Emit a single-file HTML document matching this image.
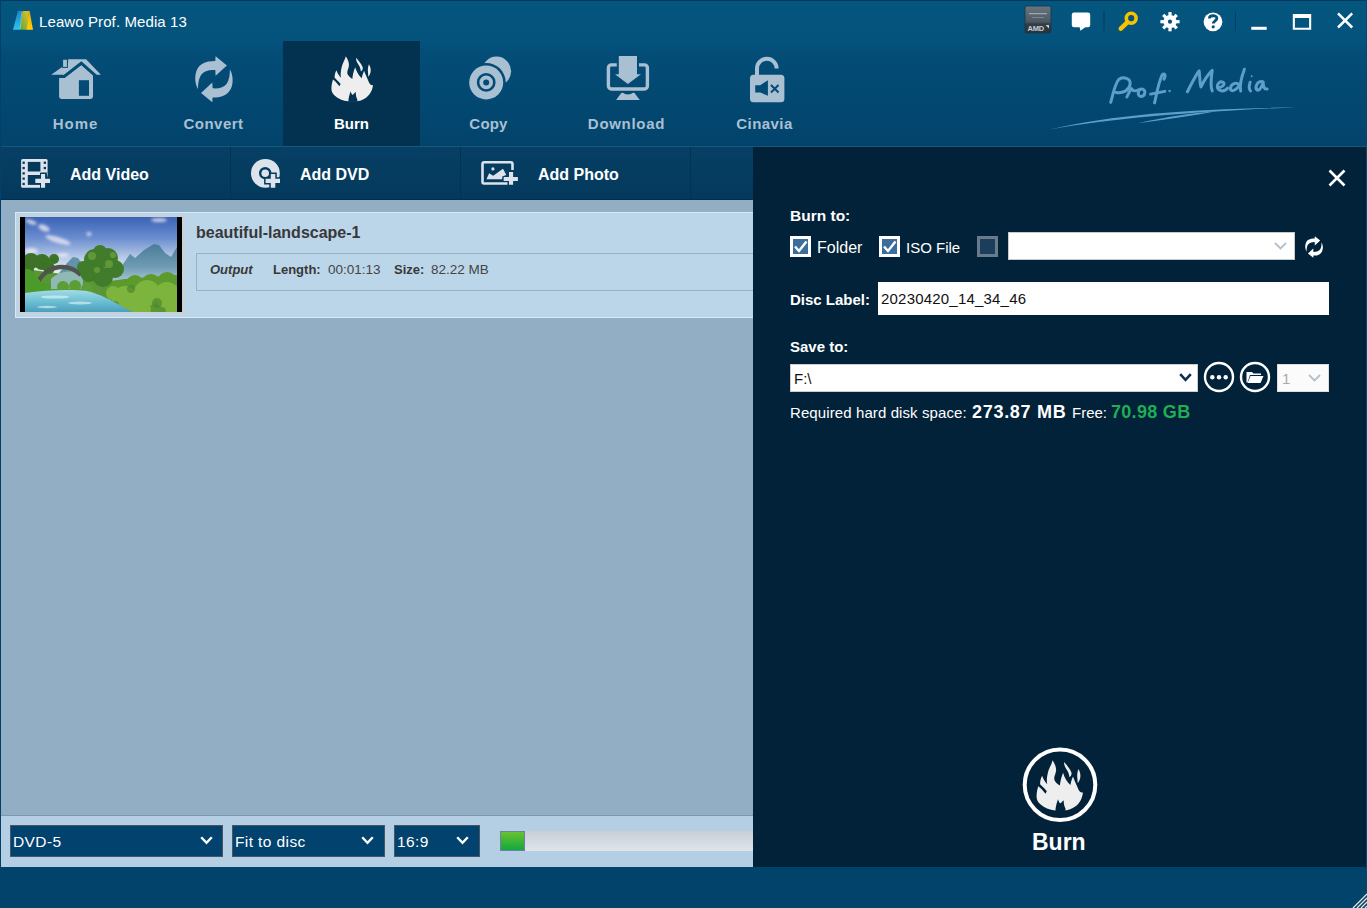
<!DOCTYPE html>
<html><head><meta charset="utf-8">
<style>
*{box-sizing:border-box;margin:0;padding:0}
html,body{width:1367px;height:908px;overflow:hidden;background:#003f66;font-family:"Liberation Sans",sans-serif}
.a{position:absolute}
svg{position:absolute;overflow:visible}
#header{position:absolute;left:0;top:0;width:1367px;height:147px;background:linear-gradient(#04567f 0%,#04537d 28%,#034d77 36%,#02436b 100%)}
#title{position:absolute;left:39px;top:13px;color:#fff;font-size:15px;letter-spacing:0.1px;white-space:nowrap}
.tab{position:absolute;top:41px;width:137px;height:105px}
.tab .lbl{position:absolute;left:0;width:100%;top:74px;font-size:15px;font-weight:bold;color:#a9c0d3;text-align:center;letter-spacing:0.5px;line-height:17px}
.tab.sel{background:#033251}
.tab.sel .lbl{color:#fff;letter-spacing:0}
#toolbar{position:absolute;left:0;top:146px;width:753px;height:54px;background:linear-gradient(#064064,#04395d);border-top:1px solid #15577f;border-bottom:1px solid #022f4e}
.tb{position:absolute;top:18px;color:#fff;font-weight:bold;font-size:16px;line-height:19px;white-space:nowrap}
.sep{position:absolute;top:0;width:1px;height:52px;background:#033352}
#content{position:absolute;left:0;top:200px;width:753px;height:615px;background:#91aec4}
#right{position:absolute;left:753px;top:147px;width:613px;height:720px;background:#02223a}
#bottom{position:absolute;left:0;top:815px;width:753px;height:52px;background:#b4cfe3;border-top:1px solid #7b98ae}
#status{position:absolute;left:0;top:867px;width:1367px;height:41px;background:#02436c}
.rl{position:absolute;color:#fff;font-size:15px;white-space:nowrap;line-height:18px}
.b{font-weight:bold}
.sel2{position:absolute;top:9px;height:32px;background:#02426e;border:1px solid #4b5560;color:#fff;font-size:15.5px;line-height:32px;padding-left:2px;letter-spacing:0.4px}
</style></head>
<body>
<div id="header">
  <!-- logo -->
  <svg style="left:13px;top:11px" width="21" height="20" viewBox="0 0 21 20">
    <defs>
      <linearGradient id="lg1" x1="0" y1="0" x2="0" y2="1"><stop offset="0" stop-color="#1b86c4"/><stop offset="1" stop-color="#2cc3f0"/></linearGradient>
      <linearGradient id="lg2" x1="1" y1="0" x2="0" y2="1"><stop offset="0" stop-color="#e8c51a"/><stop offset="1" stop-color="#55a64a"/></linearGradient>
      <linearGradient id="lg3" x1="0" y1="0" x2="0" y2="1"><stop offset="0" stop-color="#f4a41c"/><stop offset="1" stop-color="#ffd000"/></linearGradient>
    </defs>
    <path d="M0 18.7 L4.9 0 L8.9 0 L6.9 18.7 Z" fill="url(#lg1)"/>
    <path d="M6.9 18.7 L9.5 0 L16 0 L14.1 18.7 Z" fill="url(#lg2)"/>
    <path d="M13.6 18.7 L15.8 0 L16.6 0 L20 18.7 Z" fill="url(#lg3)"/>
    <path d="M8.9 0.5 L7.2 18" stroke="#d8f0f8" stroke-width="0.7" opacity="0.7"/>
  </svg>
  <div id="title">Leawo Prof. Media 13</div>

  <div class="tab" style="left:7px"><div class="lbl" style="letter-spacing:0.9px">Home</div></div>
  <div class="tab" style="left:145px"><div class="lbl" style="letter-spacing:0.5px">Convert</div></div>
  <div class="tab sel" style="left:283px"><div class="lbl">Burn</div></div>
  <div class="tab" style="left:420px"><div class="lbl" style="letter-spacing:0.2px">Copy</div></div>
  <div class="tab" style="left:558px"><div class="lbl" style="letter-spacing:0.7px">Download</div></div>
  <div class="tab" style="left:696px"><div class="lbl" style="letter-spacing:0.45px">Cinavia</div></div>
    <!-- home -->
  <svg style="left:0;top:0" width="1367" height="147">
    <g transform="translate(48 55)" fill="#a9c0d3">
      <path d="M3.2 19.8 L20.1 7.8 L20.1 4.2 L38.1 4.2 L52.9 19.8 Z"/>
      <path d="M11.1 22 L33.3 8.5 L45 20 L45 41.6 Q45 43.9 42.7 43.9 L13.4 43.9 Q11.1 43.9 11.1 41.6 Z"/>
      <path d="M4 21.4 L16.2 21.4 L33.3 8.2 L48.5 21.6" fill="none" stroke="#034b75" stroke-width="3"/>
      <rect x="14.6" y="4.2" width="4.8" height="8.2" stroke="#034b75" stroke-width="1"/>
      <rect x="30.9" y="25.2" width="10.1" height="15.6" fill="#034b75"/>
    </g>
    <!-- convert -->
    <g transform="translate(190 52)" fill="#a9c0d3">
      <path id="cvarc" d="M8 37.2 C3 28 5 16 12 12 C16 9.5 20 8.9 25.3 8.9 L25.6 4.2 L36.9 13.4 L25.6 23.8 L25.3 18.1 C19 17.5 14 19 11 23 C8.5 27 8 32 8 37.2 Z"/>
      <use href="#cvarc" transform="rotate(180 23.95 27.2)"/>
    </g>
    <!-- burn flame -->
    <g transform="translate(326 52) scale(0.05727)">
      <g fill="#eeeeee" id="flame">
        <path d="M95 640 C95 590 105 530 122 482 C150 500 190 540 235 600 L255 560 C215 510 180 480 150 450 C150 400 160 360 182 318 C200 370 230 420 262 450 C250 400 255 330 280 240 C300 180 335 130 345 75 C390 140 405 200 400 240 C395 290 368 320 372 370 C376 410 420 440 460 470 C465 410 480 340 510 268 C530 340 570 410 625 460 C632 410 648 370 665 328 C685 390 715 440 745 520 C760 560 790 590 820 578 C815 650 780 740 700 800 C640 845 580 860 520 860 L385 860 C300 855 210 820 150 760 C115 725 95 690 95 640 Z"/>
        <path d="M525 100 C570 155 620 210 640 265 C650 300 630 325 610 342 C605 300 595 260 570 225 C545 190 522 150 525 100 Z"/>
        <path d="M750 212 C785 270 790 330 770 380 C760 405 750 420 738 432 C738 380 728 330 732 290 C735 260 742 235 750 212 Z"/>
      </g>
      <g fill="#033251">
        <path d="M390 870 C392 810 405 760 430 685 C445 735 458 752 472 748 C485 730 500 712 520 700 C518 750 530 800 548 830 L545 870 Z"/>
      </g>
    </g>
    <!-- copy -->
    <g>
      <circle cx="496.5" cy="71.2" r="14.6" fill="#a9c0d3"/>
      <circle cx="486.2" cy="82.4" r="19.5" fill="#034a74"/>
      <circle cx="486.2" cy="82.4" r="17" fill="#a9c0d3"/>
      <circle cx="486.2" cy="82.4" r="8.1" fill="none" stroke="#034a74" stroke-width="2.6"/>
      <circle cx="486.2" cy="82.4" r="3" fill="#034a74"/>
    </g>
    <!-- download -->
    <g>
      <rect x="608.4" y="64.9" width="39" height="24.1" rx="3" fill="none" stroke="#a9c0d3" stroke-width="3.4"/>
      <path d="M616.8 54 L639 54 L639 72.2 L644.5 72.2 L627.9 86.5 L611.3 72.2 L616.8 72.2 Z" fill="#034a74"/>
      <path d="M618.8 56 L637 56 L637 74.2 L640.9 74.2 L627.9 84.1 L615 74.2 L618.8 74.2 Z" fill="#a9c0d3"/>
      <path d="M621.5 92.8 L634.3 92.8 L639.8 100 L616.1 100 Z" fill="#a9c0d3"/>
      <path d="M622 92 Q627.9 97 633.8 92 Z" fill="#034a74"/>
    </g>
    <!-- cinavia -->
    <g>
      <path d="M757 75 L757 68.5 A9.8 9.8 0 0 1 776.6 68.5 L776.6 67.5" fill="none" stroke="#a9c0d3" stroke-width="4"/>
      <rect x="750" y="74.7" width="34.4" height="27.6" rx="3.5" fill="#a9c0d3"/>
      <path d="M755.2 85.2 L760.2 85.2 L767.9 80.2 L767.9 95.7 L760.2 92.4 L755.2 92.4 Z" fill="#034a74"/>
      <path d="M771 85 L778.5 92.5 M778.5 85 L771 92.5" stroke="#034a74" stroke-width="2"/>
    </g>
  </svg>

  <svg style="left:0;top:0" width="1367" height="147">
    <defs>
      <linearGradient id="amd" x1="0" y1="0" x2="0" y2="1"><stop offset="0" stop-color="#68767f"/><stop offset="0.6" stop-color="#4b5761"/><stop offset="0.66" stop-color="#333d45"/><stop offset="1" stop-color="#2a333a"/></linearGradient>
    </defs>
    <rect x="1025" y="6" width="26" height="27" rx="2" fill="url(#amd)" stroke="#1d3448" stroke-width="0.8"/>
    <rect x="1029" y="13" width="18" height="1.3" fill="#b9c2c9" opacity="0.7"/>
    <rect x="1032" y="17" width="12" height="0.8" fill="#b9c2c9" opacity="0.5"/>
    <text x="1027.5" y="30.5" font-family="Liberation Sans" font-weight="bold" font-size="7.5" fill="#c8d0d6" letter-spacing="-0.2">AMD</text>
    <path d="M1045.5 25 L1049 25 L1049 28.5 Z" fill="#c8d0d6"/>
    <!-- chat -->
    <rect x="1071.8" y="12.5" width="18.4" height="14.7" rx="2.2" fill="#fff"/>
    <path d="M1079.5 26.8 L1085.8 26.8 L1080.5 30.8 Z" fill="#fff"/>
    <rect x="1103.5" y="11" width="1" height="20" fill="#023a5e"/>
    <!-- key -->
    <circle cx="1131.2" cy="18.2" r="4.9" fill="none" stroke="#f7c300" stroke-width="3.6"/>
    <path d="M1127.3 22.3 L1120.8 28.6" stroke="#f7c300" stroke-width="4.6" stroke-linecap="round"/>
    <!-- gear -->
    <g transform="translate(1170 21.7)" fill="#fff">
      <rect x="-1.6" y="-9.6" width="3.2" height="19.2"/>
      <rect x="-1.6" y="-9.6" width="3.2" height="19.2" transform="rotate(45)"/>
      <rect x="-1.6" y="-9.6" width="3.2" height="19.2" transform="rotate(90)"/>
      <rect x="-1.6" y="-9.6" width="3.2" height="19.2" transform="rotate(135)"/>
      <circle r="6.6"/>
      <circle r="2.1" fill="#03507b"/>
    </g>
    <!-- help -->
    <circle cx="1213" cy="21.8" r="9.4" fill="#fff"/>
    <path d="M1209.4 18.4 C1209.4 15 1216.9 14.8 1216.9 18.3 C1216.9 20.8 1213.2 20.9 1213.2 23.6" fill="none" stroke="#03507b" stroke-width="2.8"/>
    <circle cx="1213.2" cy="26.8" r="1.6" fill="#03507b"/>
    <rect x="1235.3" y="11" width="1" height="20" fill="#023a5e"/>
    <rect x="1236.3" y="11" width="1" height="20" fill="#0a6396" opacity="0.6"/>
    <!-- min max close -->
    <rect x="1251.3" y="26.8" width="15.4" height="3" fill="#fff"/>
    <path d="M1292.8 14 H1311.2 V29.8 H1292.8 Z M1294.9 17.9 V27.7 H1309.1 V17.9 Z" fill="#fff" fill-rule="evenodd"/>
    <path d="M1338 13.3 L1352.2 27.5 M1352.2 13.3 L1338 27.5" stroke="#fff" stroke-width="2.5"/>
    <!-- prof media script -->
    <g transform="translate(1040 55) scale(0.1975)" fill="none" stroke="#5e9ecb" stroke-width="15" stroke-linecap="round" stroke-linejoin="round">
      <path d="M358 240 C370 200 378 150 398 125 C420 105 462 118 456 150 C450 180 420 195 385 190"/>
      <path d="M440 212 C450 192 458 178 463 170 C470 180 478 188 500 176"/>
      <path d="M515 172 C495 172 490 210 512 210 C535 208 538 172 515 172 Z"/>
      <path d="M580 242 C592 190 600 140 618 102 C628 88 640 100 628 122"/>
      <path d="M560 198 L632 184"/>
      <circle cx="656" cy="182" r="6" fill="#5e9ecb" stroke="none"/>
      <path d="M746 186 C770 140 790 100 806 80 C810 120 810 150 815 162 C830 130 850 100 872 78 C866 120 862 160 872 182"/>
      <path d="M900 166 C930 162 942 142 922 136 C896 134 884 176 922 182 C935 182 945 175 950 168"/>
      <path d="M1010 152 C990 132 960 150 965 176 C975 188 1000 172 1010 152 M1035 72 C1020 112 1010 150 1016 182"/>
      <path d="M1064 138 C1058 156 1054 170 1066 182"/>
      <circle cx="1072" cy="108" r="5" fill="#5e9ecb" stroke="none"/>
      <path d="M1130 136 C1100 126 1085 166 1100 178 C1115 182 1126 152 1130 136 C1130 160 1135 176 1150 172"/>
    </g>
    <g transform="translate(1040 55) scale(0.1975)" fill="#5e9ecb">
      <path d="M45 378 C400 294 800 274 1295 264 C800 288 400 314 45 378 Z"/>
      <path d="M495 345 C650 310 780 292 905 283 C780 304 650 326 495 345 Z"/>
    </g>
  </svg>

</div>
<div id="toolbar">
  <div class="tb" style="left:70px">Add Video</div>
  <div class="sep" style="left:230px"></div>
  <div class="tb" style="left:300px">Add DVD</div>
  <div class="sep" style="left:460px"></div>
  <div class="tb" style="left:538px">Add Photo</div>
  <div class="sep" style="left:690px"></div>
    <svg style="left:-0px;top:-147px" width="753" height="200">
    <!-- film -->
    <g transform="translate(16 155)">
      <rect x="5.1" y="3.9" width="26.5" height="28.9" rx="1.5" fill="#dce3ea"/>
      <g fill="#053a5e">
        <rect x="6.5" y="6.6" width="2.3" height="2.3"/><rect x="6.5" y="11.9" width="2.3" height="2.3"/><rect x="6.5" y="17.2" width="2.3" height="2.3"/><rect x="6.5" y="22.5" width="2.3" height="2.3"/><rect x="6.5" y="27.8" width="2.3" height="2.3"/>
        <rect x="27.7" y="6.6" width="2.3" height="2.3"/><rect x="27.7" y="11.9" width="2.3" height="2.3"/>
        <rect x="11.8" y="6.9" width="12.6" height="9.6"/>
        <rect x="11.8" y="20" width="12.6" height="9.9"/>
        <path d="M24.4 17.5 L33 17.5 L33 33.5 L24.4 33.5 Z"/>
      </g>
      <path d="M30.6 17.5 L31.6 17.5 L31.6 22.8 Z" fill="#dce3ea"/>
      <path d="M24 18.1 H30.1 V22.8 H35 V29.1 H30.1 V33.8 H24 V29.1 H18.3 V22.8 H24 Z" fill="#053a5e"/>
      <path d="M25 19.1 H29.1 V23.8 H34 V28.1 H29.1 V32.8 H25 V28.1 H19.3 V23.8 H25 Z" fill="#dce3ea"/>
    </g>
    <!-- dvd -->
    <g transform="translate(246 155)">
      <circle cx="19.4" cy="18.3" r="14.4" fill="#dce3ea"/>
      <circle cx="19.2" cy="18.2" r="5" fill="none" stroke="#053a5e" stroke-width="2.4"/>
      <path d="M23.3 17.6 H30.8 V22.3 H35.5 V29.6 H30.8 V34.5 H23.3 V29.6 H18.1 V22.3 H23.3 Z" fill="#053a5e"/>
      <path d="M24.8 19.1 H29.3 V23.8 H34 V28.1 H29.3 V32.8 H24.8 V28.1 H19.6 V23.8 H24.8 Z" fill="#dce3ea"/>
    </g>
    <!-- photo -->
    <g transform="translate(476 156)" fill="#dce3ea">
      <path d="M31.5 27.5 L8 27.5 Q6.5 27.5 6.5 26 L6.5 8 Q6.5 6.2 8.3 6.2 L34.7 6.2 Q36.5 6.2 36.5 8 L36.5 13.9" fill="none" stroke="#dce3ea" stroke-width="2.6"/>
      <circle cx="16.9" cy="12.9" r="1.6"/>
      <path d="M10.5 23.2 L13.1 17.2 L17.2 19.8 L27 12.7 L30.3 19 L26.2 20.5 L26.2 23.2 Z"/>
      <path d="M33 16.1 H37.1 V21 H41.9 V25.1 H37.1 V28.8 H33 V25.1 H27.7 V21 H33 Z"/>
    </g>
  </svg>

</div>
<div id="content">
    <div class="a" style="left:15px;top:12px;width:760px;height:106px;background:#bcd6e9;border:1px solid #d8e8f4;border-right:none"></div>
  <div class="a" style="left:18px;top:15px;width:167px;height:99px;background:#c9d1d8"></div>
  <div class="a" style="left:20px;top:17px;width:162px;height:95px;background:#000"></div>
  <svg style="left:25px;top:17px;overflow:hidden" width="152" height="95" viewBox="0 0 152 95">
    <defs>
      <linearGradient id="sky" x1="0" y1="0" x2="0" y2="1">
        <stop offset="0" stop-color="#3a63b6"/><stop offset="0.22" stop-color="#6a8ccf"/><stop offset="0.42" stop-color="#b4c8e6"/><stop offset="0.55" stop-color="#e2e9f0"/><stop offset="1" stop-color="#e6edf0"/>
      </linearGradient>
      <linearGradient id="mtn" x1="0" y1="0" x2="0" y2="1">
        <stop offset="0" stop-color="#4b7c9a"/><stop offset="0.6" stop-color="#6d9ab3"/><stop offset="1" stop-color="#a3c4cf"/>
      </linearGradient>
      <linearGradient id="water" x1="0" y1="0" x2="0" y2="1">
        <stop offset="0" stop-color="#a2dbe6"/><stop offset="0.5" stop-color="#6ec0d4"/><stop offset="1" stop-color="#4a9fbd"/>
      </linearGradient>
      <filter id="bl"><feGaussianBlur stdDeviation="0.7"/></filter>
      <filter id="bl2"><feGaussianBlur stdDeviation="1.4"/></filter>
    </defs>
    <rect width="152" height="95" fill="url(#sky)"/>
    <g fill="#f4eef4" opacity="0.75" filter="url(#bl2)">
      <ellipse cx="6" cy="5" rx="6" ry="2" transform="rotate(20 6 5)"/>
      <ellipse cx="19" cy="11" rx="6" ry="3" transform="rotate(25 19 11)"/>
      <ellipse cx="33" cy="23" rx="13" ry="3" transform="rotate(18 33 23)"/>
      <ellipse cx="6" cy="34" rx="7" ry="3"/>
      <ellipse cx="38" cy="38" rx="6" ry="2"/>
      <ellipse cx="134" cy="3" rx="8" ry="2"/>
      <ellipse cx="64" cy="17" rx="2.5" ry="2"/>
    </g>
    <g filter="url(#bl)">
      <path d="M84 64 L98 47 L105 37 L110 41 L119 33 L129 27 L134 28 L140 36 L146 40 L152 30 L152 64 Z" fill="url(#mtn)"/>
      <path d="M34 56 L42 46 L48 40 L53 41 L58 48 L60 58 Z" fill="#6592ab"/>
      <path d="M0 52 L30 56 L60 60 L85 64 L100 62 L152 58 L152 95 L0 95 Z" fill="#5a9634"/>
      <path d="M26 62 C34 54 48 52 58 58 L58 72 L26 72 Z" fill="#8fb9b4"/>
      <g fill="#3c7328">
        <circle cx="6" cy="44" r="8"/><circle cx="17" cy="45" r="8"/><circle cx="29" cy="42" r="5"/><circle cx="2" cy="52" r="7"/><circle cx="24" cy="51" r="6"/>
      </g>
      <path d="M12 68 C16 56 27 50 37 50 C45 50 52 54 56 58" fill="none" stroke="#4f544a" stroke-width="4.5"/>
      <g fill="#3f7b2b">
        <circle cx="70" cy="43" r="11"/><circle cx="83" cy="41" r="10"/><circle cx="90" cy="52" r="9"/><circle cx="64" cy="56" r="9"/><circle cx="78" cy="60" r="10"/><circle cx="75" cy="35" r="7"/><circle cx="58" cy="50" r="6"/>
      </g>
      <g fill="#6a9e3c" opacity="0.8">
        <circle cx="67" cy="39" r="4"/><circle cx="84" cy="47" r="4"/><circle cx="72" cy="53" r="3"/><circle cx="88" cy="38" r="3"/>
      </g>
      <g fill="#4c9a2a">
        <circle cx="6" cy="70" r="11"/><circle cx="2" cy="60" r="8"/><circle cx="20" cy="72" r="6"/>
      </g>
      <g fill="#5a9e34">
        <circle cx="38" cy="70" r="6"/><circle cx="50" cy="69" r="6"/><circle cx="62" cy="72" r="6"/>
      </g>
      <g fill="#5d9a2e">
        <circle cx="95" cy="73" r="10"/><circle cx="110" cy="67" r="9"/><circle cx="126" cy="67" r="10"/><circle cx="142" cy="65" r="10"/><circle cx="152" cy="66" r="8"/>
      </g>
      <g fill="#7db43c">
        <circle cx="100" cy="82" r="13"/><circle cx="122" cy="76" r="13"/><circle cx="142" cy="78" r="13"/><circle cx="150" cy="90" r="10"/><circle cx="116" cy="92" r="10"/><circle cx="88" cy="76" r="7"/>
      </g>
      <g fill="#4e8a2c" opacity="0.7">
        <circle cx="106" cy="72" r="4"/><circle cx="132" cy="86" r="5"/><circle cx="90" cy="88" r="4"/>
      </g>
      <path d="M0 76 C20 73 45 72 62 74 C75 77 88 84 98 90 L108 95 L0 95 Z" fill="url(#water)"/>
      <g fill="#e6f7fa" opacity="0.6">
        <ellipse cx="30" cy="80" rx="14" ry="1.6"/><ellipse cx="55" cy="86" rx="12" ry="1.4"/><ellipse cx="22" cy="90" rx="10" ry="1.2"/>
      </g>
    </g>
  </svg>
  <div class="a" style="left:196px;top:23px;font-size:16px;font-weight:bold;color:#383838;line-height:19px;white-space:nowrap">beautiful-landscape-1</div>
  <div class="a" style="left:196px;top:53px;width:580px;height:38px;border:1px solid #9ab1c4;border-right:none"></div>
  <div class="a" style="left:210px;top:62px;font-size:13px;line-height:16px;color:#383838;white-space:nowrap"><i><b>Output</b></i></div>
  <div class="a" style="left:273px;top:62px;font-size:13px;line-height:16px;color:#383838;white-space:nowrap"><b>Length:</b></div>
  <div class="a" style="left:328px;top:62px;font-size:13.5px;line-height:16px;color:#444;white-space:nowrap">00:01:13</div>
  <div class="a" style="left:394px;top:62px;font-size:13px;line-height:16px;color:#383838;white-space:nowrap"><b>Size:</b></div>
  <div class="a" style="left:431px;top:62px;font-size:13.5px;line-height:16px;color:#444;white-space:nowrap">82.22 MB</div>

</div>
<div id="right">
    <!-- close X -->
  <svg style="left:575px;top:22px" width="18" height="18"><path d="M1.5 1.5 L16.5 16.5 M16.5 1.5 L1.5 16.5" stroke="#fff" stroke-width="2.6"/></svg>
  <div class="rl b" style="left:37px;top:60px;font-size:15.5px">Burn to:</div>
  <!-- checkbox 1 -->
  <div class="a" style="left:37px;top:89px;width:21px;height:21px;border:3px solid #fff;background:#3b6e9b"></div>
  <svg style="left:37px;top:89px" width="21" height="21"><path d="M5 10.5 L9 15 L16.5 5.5" fill="none" stroke="#fff" stroke-width="2.4"/></svg>
  <div class="rl" style="left:64px;top:92px;font-size:16px">Folder</div>
  <div class="a" style="left:126px;top:89px;width:21px;height:21px;border:3px solid #fff;background:#3b6e9b"></div>
  <svg style="left:126px;top:89px" width="21" height="21"><path d="M5 10.5 L9 15 L16.5 5.5" fill="none" stroke="#fff" stroke-width="2.4"/></svg>
  <div class="rl" style="left:153px;top:92px;font-size:15px">ISO File</div>
  <div class="a" style="left:224px;top:89px;width:21px;height:21px;border:3px solid #677b8b;background:#1b3e5d"></div>
  <!-- dropdown -->
  <div class="a" style="left:255px;top:85px;width:287px;height:28px;background:#fff;border:1px solid #c9c9c9"></div>
  <svg style="left:521px;top:95px" width="13" height="8"><path d="M1 1 L6.5 6.5 L12 1" fill="none" stroke="#b3c0cc" stroke-width="1.8"/></svg>
  <!-- refresh -->
  <svg style="left:0;top:0" width="614" height="300">
    <g transform="translate(549.8 87.2) scale(0.47)" fill="#fff">
      <path d="M8 37.2 C3 28 5 16 12 12 C16 9.5 20 8.9 25.3 8.9 L25.6 4.2 L36.9 13.4 L25.6 23.8 L25.3 16.6 C19 16.5 13 18.5 10.5 23 C8.3 27 8 32 8 37.2 Z"/>
      <path d="M8 37.2 C3 28 5 16 12 12 C16 9.5 20 8.9 25.3 8.9 L25.6 4.2 L36.9 13.4 L25.6 23.8 L25.3 16.6 C19 16.5 13 18.5 10.5 23 C8.3 27 8 32 8 37.2 Z" transform="rotate(180 23.95 27.2)"/>
    </g>
  </svg>
  <div class="rl b" style="left:37px;top:144px">Disc Label:</div>
  <div class="a" style="left:125px;top:135px;width:451px;height:33px;background:#fff"></div>
  <div class="rl" style="left:128px;top:143px;color:#111;letter-spacing:0.2px">20230420_14_34_46</div>
  <div class="rl b" style="left:37px;top:191px">Save to:</div>
  <div class="a" style="left:37px;top:217px;width:408px;height:28px;background:#fff;border:1px solid #ccc"></div>
  <div class="rl" style="left:41px;top:223px;color:#111">F:\</div>
  <svg style="left:426px;top:226px" width="13" height="9"><path d="M1.2 1.2 L6.5 6.8 L11.8 1.2" fill="none" stroke="#0d2d52" stroke-width="2.6"/></svg>
  <!-- circle buttons -->
  <svg style="left:450px;top:214px" width="32" height="32"><circle cx="16" cy="16" r="14" fill="none" stroke="#fff" stroke-width="2.4"/><circle cx="9.3" cy="16.3" r="2.2" fill="#fff"/><circle cx="16" cy="16.3" r="2.2" fill="#fff"/><circle cx="22.7" cy="16.3" r="2.2" fill="#fff"/></svg>
  <svg style="left:486px;top:214px" width="32" height="32"><circle cx="16" cy="16" r="14" fill="none" stroke="#fff" stroke-width="2.4"/>
    <path d="M7.5 11 L13 11 L14.5 12.5 L22 12.5 L22 14 L11 14 L8.5 21.5 L7.5 21.5 Z" fill="#fff"/><path d="M11.5 15 L24.5 15 L21.5 22 L8.5 22 Z" fill="#fff"/></svg>
  <div class="a" style="left:524px;top:217px;width:52px;height:28px;background:#fbfbfb;border:1px solid #ddd"></div>
  <div class="rl" style="left:529px;top:223px;color:#a9a9a9">1</div>
  <svg style="left:555px;top:227px" width="13" height="8"><path d="M1 1 L6.5 6.5 L12 1" fill="none" stroke="#b3c0cc" stroke-width="1.8"/></svg>
  <div class="rl" style="left:37px;top:257px;letter-spacing:0.1px">Required hard disk space:</div>
  <div class="rl b" style="left:219px;top:255px;font-size:18px;line-height:20px;letter-spacing:0.7px">273.87 MB</div>
  <div class="rl" style="left:319px;top:257px">Free:</div>
  <div class="rl b" style="left:358px;top:255px;font-size:18px;line-height:20px;letter-spacing:0.3px;color:#1fae55">70.98 GB</div>
  <!-- burn button -->
  <svg style="left:270px;top:600px" width="76" height="76"><circle cx="37" cy="37.8" r="35.3" fill="none" stroke="#fff" stroke-width="4"/>
    <g transform="translate(7.5 8.5) scale(0.0639)">
      <use href="#flame"/>
      <g fill="#02233b">
        <path d="M390 870 C392 810 405 760 430 685 C445 735 458 752 472 748 C485 730 500 712 520 700 C518 750 530 800 548 830 L545 870 Z"/>
      </g>
    </g>
  </svg>
  <div class="rl b" style="left:279px;top:682px;font-size:23px;line-height:26px">Burn</div>

</div>
<div id="bottom">
  <div class="sel2" style="left:10px;width:213px">DVD-5</div>
  <svg style="left:200px;top:20px" width="13" height="9"><path d="M1.2 1.2 L6.5 6.8 L11.8 1.2" fill="none" stroke="#fff" stroke-width="2.4"/></svg>
  <div class="sel2" style="left:232px;width:153px">Fit to disc</div>
  <svg style="left:361px;top:20px" width="13" height="9"><path d="M1.2 1.2 L6.5 6.8 L11.8 1.2" fill="none" stroke="#fff" stroke-width="2.4"/></svg>
  <div class="sel2" style="left:394px;width:86px">16:9</div>
  <svg style="left:456px;top:20px" width="13" height="9"><path d="M1.2 1.2 L6.5 6.8 L11.8 1.2" fill="none" stroke="#fff" stroke-width="2.4"/></svg>
  <div class="a" style="left:500px;top:15px;width:253px;height:20px;background:linear-gradient(#c8cfd7,#dee4ea)"></div>
  <div class="a" style="left:500px;top:15px;width:25px;height:20px;background:linear-gradient(#68c22e,#12a83f);border:1px solid #7080a4"></div>
  
</div>
<div id="status"></div>
<div class="a" style="left:0;top:0;width:1367px;height:1px;background:#033a5c"></div>
<div class="a" style="left:1366px;top:0;width:1px;height:908px;background:#03486f"></div>
<div class="a" style="left:0;top:0;width:1px;height:867px;background:#02406a"></div>
<svg style="left:1352px;top:893px" width="15" height="15"><g stroke="#e8e4de" stroke-width="1.2"><path d="M1 15 L15 1"/><path d="M5 15 L15 5"/><path d="M9 15 L15 9"/><path d="M13 15 L15 13"/></g></svg>

<div class="a" style="left:753px;top:146px;width:614px;height:1px;background:#15577f"></div>
</body></html>
